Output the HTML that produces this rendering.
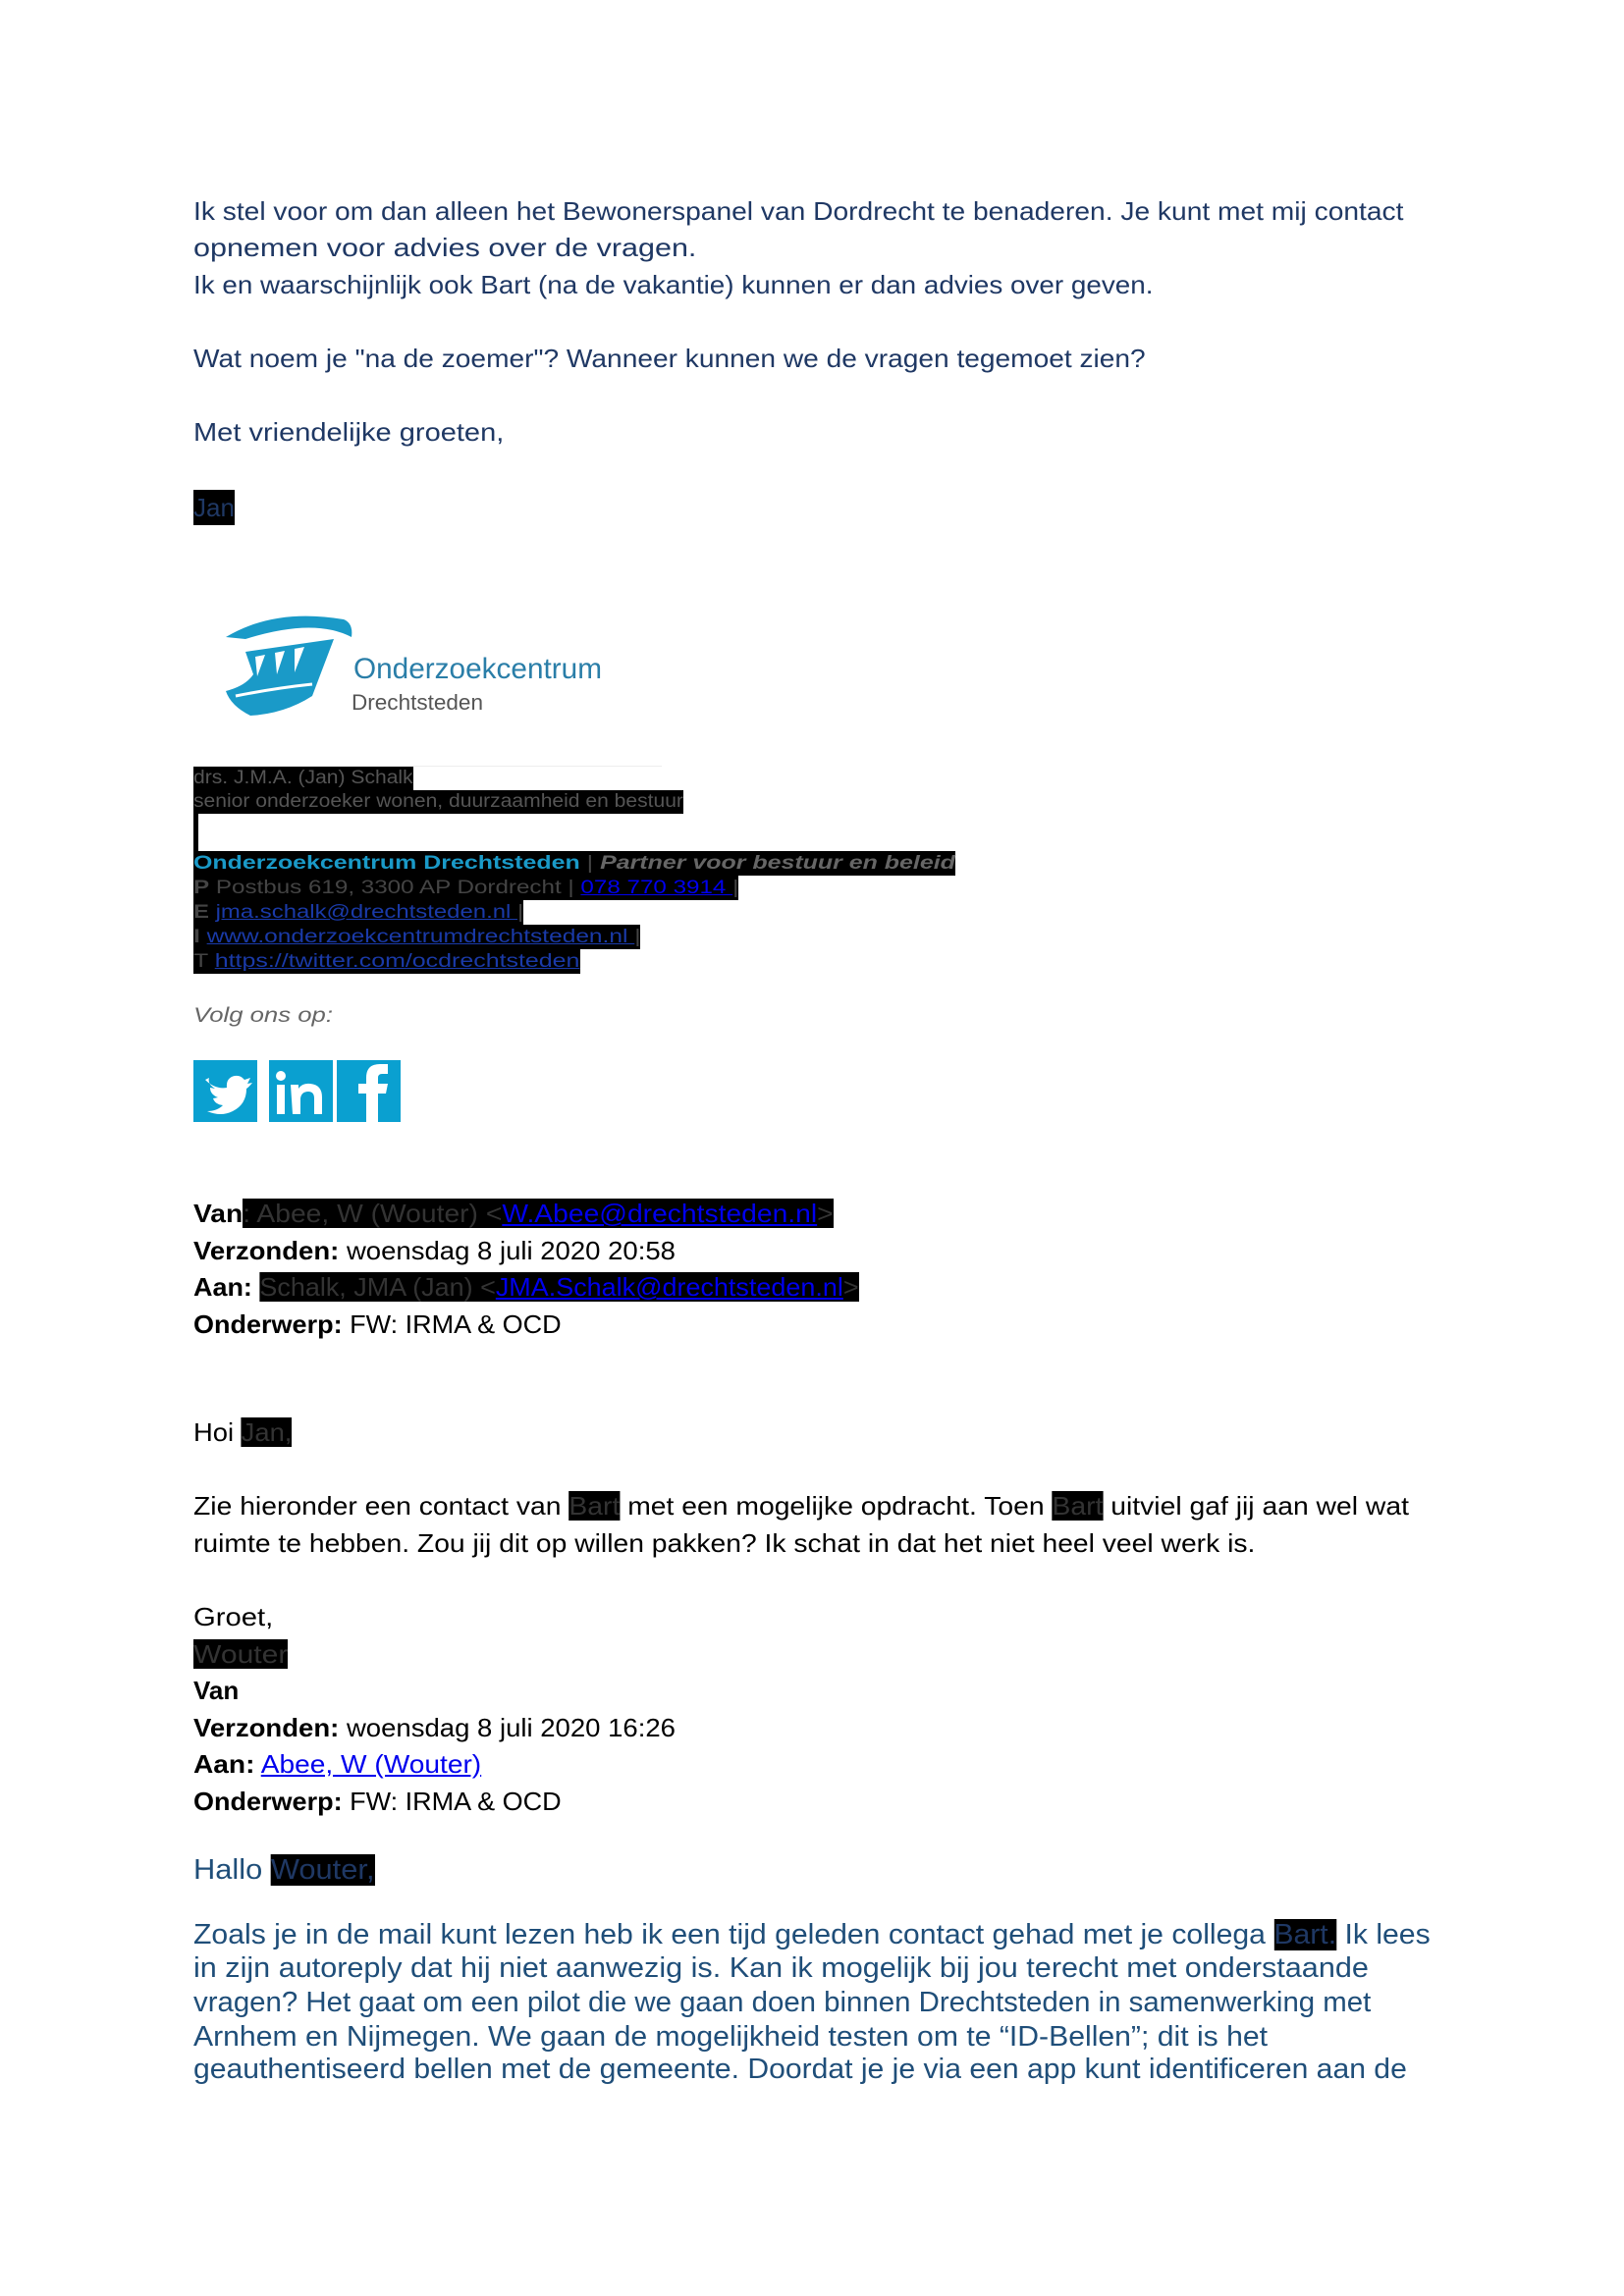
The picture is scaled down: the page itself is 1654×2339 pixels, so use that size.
<!DOCTYPE html>
<html><head><meta charset="utf-8"><style>
body{margin:0;width:1654px;height:2339px;background:#fff;position:relative;overflow:hidden;font-family:"Liberation Sans",sans-serif}
.l{position:absolute;left:197px;white-space:nowrap;transform-origin:0 50%;line-height:1}
.b1{color:#1f3864;font-size:26px}
.k{color:#000;font-size:26px}
.bl{color:#1f4e79;font-size:29px}
.r{background:#000;color:#333}
.rb{background:#000;color:#1f3864}
a{color:#0000ee;text-decoration:underline}
.s{font-size:19px;color:#444;background:#000}
.s a{color:#1a3aa8}
b{font-weight:bold}
</style></head><body>
<div class="l b1" style="top:202px;--w:1232">Ik stel voor om dan alleen het Bewonerspanel van Dordrecht te benaderen. Je kunt met mij contact</div>
<div class="l b1" style="top:239px;--w:513">opnemen voor advies over de vragen.</div>
<div class="l b1" style="top:277px;--w:977">Ik en waarschijnlijk ook Bart (na de vakantie) kunnen er dan advies over geven.</div>
<div class="l b1" style="top:352px;--w:970">Wat noem je "na de zoemer"? Wanneer kunnen we de vragen tegemoet zien?</div>
<div class="l b1" style="top:427px;--w:316">Met vriendelijke groeten,</div>
<div style="position:absolute;left:197px;top:499px;width:42px;height:36px;background:#000;color:#1f3864;font-size:26px;line-height:36px">Jan</div>

<svg style="position:absolute;left:200px;top:609px" width="420" height="136" viewBox="0 0 420 136">
<path d="M30 40 Q80 10 150 22 Q160 26 158 40 Q120 20 50 42 Z" fill="#1a9ac8"/>
<path d="M50 55 L140 42 L118 100 Q90 118 55 120 Q35 110 30 95 Q50 90 58 78 Z" fill="#1a9ac8"/>
<path d="M60 60 L70 58 L62 80 Z M80 56 L90 54 L82 78 Z M100 52 L110 50 L100 76 Z" fill="#fff"/>
<path d="M40 100 Q80 92 118 88" stroke="#fff" stroke-width="3" fill="none"/>
<text x="160" y="82" font-family="Liberation Sans,sans-serif" font-size="30" fill="#2a7ea8" textLength="253" lengthAdjust="spacingAndGlyphs">Onderzoekcentrum</text>
<text x="158" y="114" font-family="Liberation Sans,sans-serif" font-size="22" fill="#555" textLength="134" lengthAdjust="spacingAndGlyphs">Drechtsteden</text>
</svg>

<div style="position:absolute;left:197px;top:780px;width:477px;height:1px;background:#eee"></div>
<div class="l s" style="top:781px;--w:224;height:24px;line-height:24px;color:#555">drs. J.M.A. (Jan) Schalk</div>
<div class="l s" style="top:805px;--w:499;height:24px;line-height:24px;color:#555">senior onderzoeker wonen, duurzaamheid en bestuur</div>
<div style="position:absolute;left:197px;top:829px;width:5px;height:38px;background:#000"></div>
<div class="l s" style="top:867px;--w:776;height:25px;line-height:25px"><b style="color:#1a9ac8">Onderzoekcentrum Drechtsteden</b> | <b><i style="color:#666">Partner voor bestuur en beleid</i></b></div>
<div class="l s" style="top:892px;--w:555;height:25px;line-height:25px"><b>P</b> Postbus 619, 3300 AP Dordrecht | <a style="color:#00e">078 770 3914 </a> |</div>
<div class="l s" style="top:917px;--w:336;height:25px;line-height:25px"><b>E</b> <a>jma.schalk@drechtsteden.nl </a> |</div>
<div class="l s" style="top:942px;--w:455;height:25px;line-height:25px"><b>I</b> <a>www.onderzoekcentrumdrechtsteden.nl </a> |</div>
<div class="l s" style="top:967px;--w:394;height:25px;line-height:25px">T <a>https://twitter.com/ocdrechtsteden</a></div>
<div class="l" style="top:1024px;font-size:21px;color:#666;font-style:italic;--w:142">Volg ons op:</div>

<svg style="position:absolute;left:197px;top:1080px" width="215" height="64" viewBox="0 0 215 64">
<rect x="0" y="0" width="65" height="63" fill="#0aa0d0"/>
<path d="M12 20 Q22 30 34 28 Q33 18 42 16 Q48 15 52 20 L58 18 L55 24 L60 23 Q56 28 54 29 Q54 45 40 52 Q28 58 14 52 Q24 52 30 46 Q22 45 20 39 L25 38 Q17 35 17 28 L22 29 Q14 24 16 18 Z" fill="#fff"/>
<rect x="77" y="0" width="65" height="63" fill="#0aa0d0"/>
<rect x="85" y="25" width="8" height="30" fill="#fff"/><circle cx="89" cy="16" r="5" fill="#fff"/>
<path d="M99 25 h8 v4 q4-6 12-5 q12 1 12 14 v17 h-8 v-16 q0-7-6-7 q-7 0-8 7 v16 h-8 Z" fill="#fff"/>
<rect x="146" y="0" width="65" height="63" fill="#0aa0d0"/>
<path d="M176 63 V34 h-8 v-10 h8 v-6 q0-14 14-14 h8 v10 h-6 q-4 0-4 4 v6 h10 l-2 10 h-8 v29 Z" fill="#fff"/>
</svg>

<div class="l k" style="top:1223px;--w:652"><b>Van</b><span class="r" style="color:#333">: Abee, W (Wouter) &lt;<a>W.Abee@drechtsteden.nl</a>&gt;</span></div>
<div class="l k" style="top:1261px;--w:491"><b>Verzonden:</b> woensdag 8 juli 2020 20:58</div>
<div class="l k" style="top:1298px;--w:678"><b>Aan:</b> <span class="r">Schalk, JMA (Jan) &lt;<a>JMA.Schalk@drechtsteden.nl</a>&gt;</span></div>
<div class="l k" style="top:1336px;--w:375"><b>Onderwerp:</b> FW: IRMA &amp; OCD</div>
<div class="l k" style="top:1446px;--w:100">Hoi <span class="r">Jan,</span></div>
<div class="l k" style="top:1521px;--w:1238">Zie hieronder een contact van <span class="r">Bart</span> met een mogelijke opdracht. Toen <span class="r">Bart</span> uitviel gaf jij aan wel wat</div>
<div class="l k" style="top:1559px;--w:1081">ruimte te hebben. Zou jij dit op willen pakken? Ik schat in dat het niet heel veel werk is.</div>
<div class="l k" style="top:1634px;--w:81">Groet,</div>
<div class="l k" style="top:1672px;--w:96"><span class="r">Wouter</span></div>
<div class="l k" style="top:1709px"><b>Van</b></div>
<div class="l k" style="top:1747px;--w:491"><b>Verzonden:</b> woensdag 8 juli 2020 16:26</div>
<div class="l k" style="top:1784px;--w:293"><b>Aan:</b> <a>Abee, W (Wouter)</a></div>
<div class="l k" style="top:1822px;--w:375"><b>Onderwerp:</b> FW: IRMA &amp; OCD</div>
<div class="l bl" style="top:1891px;--w:185">Hallo <span class="rb">Wouter,</span></div>
<div class="l bl" style="top:1957px;--w:1260">Zoals je in de mail kunt lezen heb ik een tijd geleden contact gehad met je collega <span class="rb">Bart.</span> Ik lees</div>
<div class="l bl" style="top:1991px;--w:1197">in zijn autoreply dat hij niet aanwezig is. Kan ik mogelijk bij jou terecht met onderstaande</div>
<div class="l bl" style="top:2026px;--w:1199">vragen? Het gaat om een pilot die we gaan doen binnen Drechtsteden in samenwerking met</div>
<div class="l bl" style="top:2061px;--w:1094">Arnhem en Nijmegen. We gaan de mogelijkheid testen om te “ID-Bellen”; dit is het</div>
<div class="l bl" style="top:2094px;--w:1236">geauthentiseerd bellen met de gemeente. Doordat je je via een app kunt identificeren aan de</div>
<script>
document.querySelectorAll('.l').forEach(function(e){
var w=parseFloat(getComputedStyle(e).getPropertyValue('--w'));
if(w){var a=e.scrollWidth;if(a>0)e.style.transform='scaleX('+(w/a)+')';}
});
</script>
</body></html>
